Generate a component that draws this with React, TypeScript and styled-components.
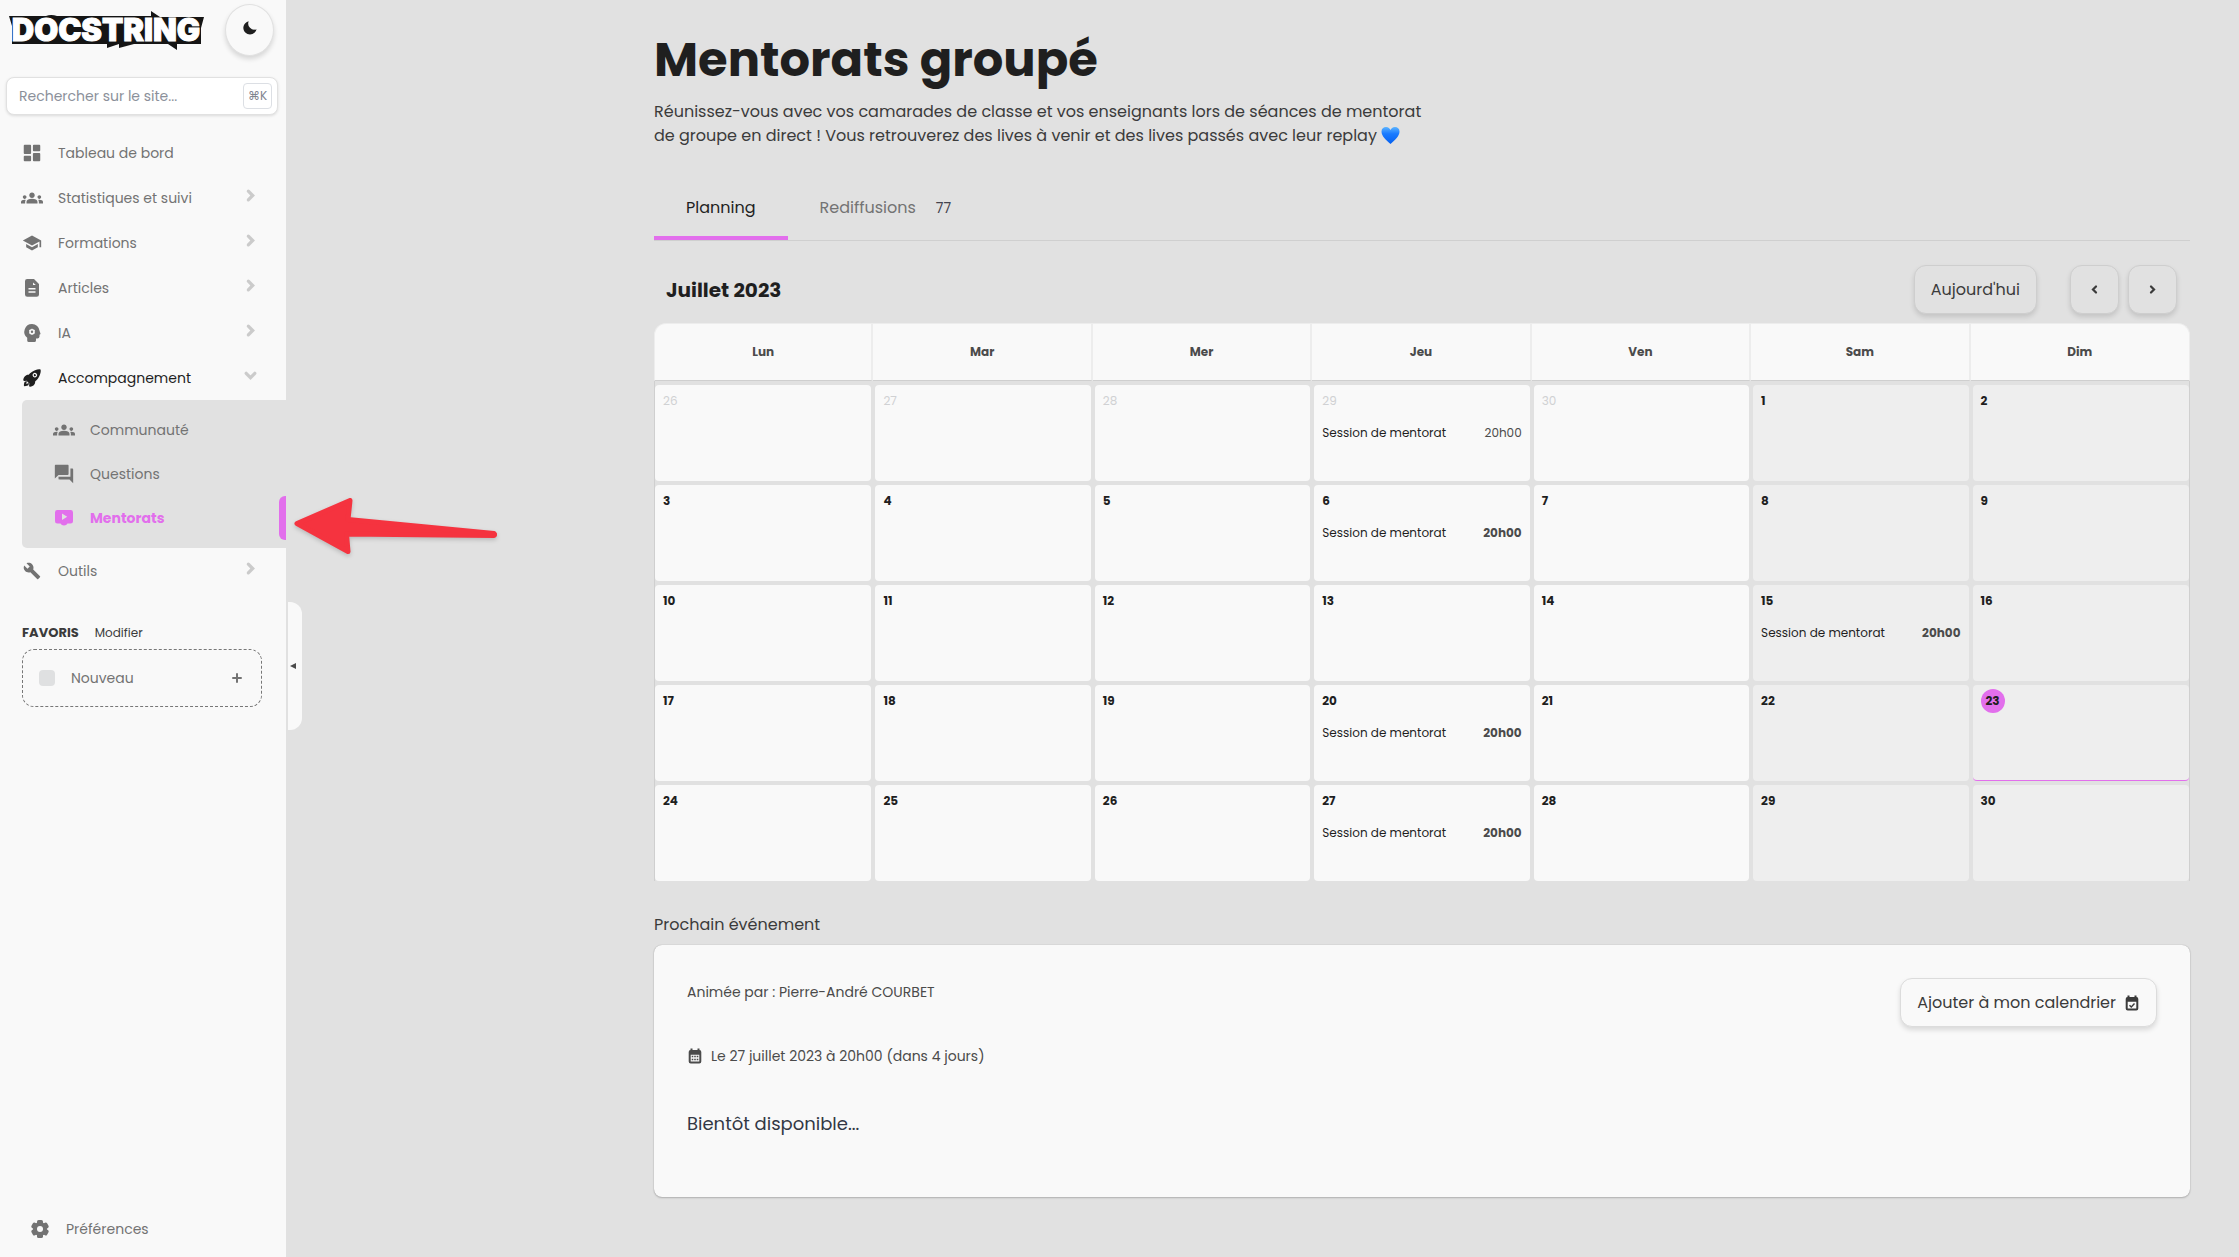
import React from "react";
import styled, { createGlobalStyle, css } from "styled-components";
import { BiSolidDashboard, BiSolidMoon } from "react-icons/bi";
import { MdBuild, MdForum, MdGroups, MdSchool } from "react-icons/md";
import { IoRocket } from "react-icons/io5";

const color = {
  page: "#e1e1e1",
  panel: "#f9f9f9",
  weekend: "#eeeeee",
  ink: "#1f1f1f",
  text: "#3b3b3b",
  soft: "#4b4b4b",
  muted: "#737373",
  faint: "#d0d1d3",
  line: "#cfcfcf",
  accent: "#e26fec",
};

const GlobalStyle = createGlobalStyle`
  *, *::before, *::after { box-sizing: border-box; }
  body {
    margin: 0;
    background: ${color.page};
    color: ${color.text};
    font-family: Poppins, Inter, "Liberation Sans", sans-serif;
    font-size: 16px;
    line-height: 24px;
  }
  button, input { font: inherit; color: inherit; }
  button { cursor: pointer; }
  a { color: inherit; text-decoration: none; }
  h1, h2, p { margin: 0; }
`;

const Layout = styled.div`
  display: flex;
  min-height: 100vh;
`;

/* ---------- Sidebar ---------- */

const Sidebar = styled.aside`
  position: sticky;
  top: 0;
  display: flex;
  flex-direction: column;
  flex: 0 0 286px;
  min-width: 0;
  height: 100vh;
  background: ${color.panel};
  font-size: 14px;
`;

const Brand = styled.div`
  display: flex;
  align-items: center;
  justify-content: space-between;
  padding: 4px 12px 0 8px;
`;

const LogoLink = styled.a`
  display: flex;
  svg { display: block; }
`;

const RoundButton = styled.button`
  display: flex;
  align-items: center;
  justify-content: center;
  width: 49px;
  height: 52px;
  padding: 0 0 4px;
  border: 1px solid ${color.page};
  border-radius: 50%;
  background: ${color.panel};
  color: ${color.ink};
  box-shadow: 0 3px 5px rgba(0, 0, 0, 0.14);
`;

const SearchBox = styled.label`
  display: flex;
  align-items: center;
  height: 38px;
  margin: 21px 8px 0 6px;
  padding: 0 5px 0 12px;
  border: 1px solid ${color.page};
  border-radius: 8px;
  background: #fff;
  box-shadow: 0 1px 3px rgba(0, 0, 0, 0.12);
`;

const SearchInput = styled.input`
  flex: 1;
  width: 100%;
  min-width: 0;
  padding: 0;
  border: 0;
  outline: 0;
  background: none;
  &::placeholder { color: #8b909a; opacity: 1; }
`;

const Shortcut = styled.kbd`
  display: flex;
  align-items: center;
  justify-content: center;
  flex: 0 0 29px;
  height: 26px;
  border: 1px solid #dcdfe4;
  border-radius: 4px;
  color: #80858f;
  font-family: inherit;
  font-size: 12px;
`;

const Nav = styled.nav`
  margin-top: 15px;
`;

const navRow = css`
  display: flex;
  align-items: center;
  gap: 16px;
  width: 100%;
  border: 0;
  background: none;
  text-align: left;
  svg { flex: none; }
`;

const NavLink = styled.a`
  ${navRow}
  height: 45px;
  padding: 0 30px 0 22px;
  color: ${color.muted};
`;

const NavToggle = styled.button<{ $open?: boolean }>`
  ${navRow}
  height: 45px;
  padding: 0 30px 0 22px;
  color: ${(p) => (p.$open ? color.ink : color.muted)};
`;

const NavLabel = styled.span`
  flex: 1;
`;

const IconSlot = styled.span`
  display: flex;
  align-items: center;
  justify-content: center;
  flex: 0 0 20px;
  min-width: 0;
`;

const ChevronSlot = styled.span`
  display: flex;
  justify-content: center;
  width: 12px;
  padding-bottom: 5px;
  color: #cbcbcb;
`;

const SubMenu = styled.div`
  margin-left: 22px;
  padding: 8px 0;
  border-radius: 5px 0 0 5px;
  background: ${color.page};
`;

const SubLink = styled.a<{ $active?: boolean }>`
  ${navRow}
  height: 44px;
  padding-left: 32px;
  color: ${(p) => (p.$active ? color.accent : color.muted)};
  font-weight: ${(p) => (p.$active ? 700 : 400)};
  ${(p) =>
    p.$active &&
    css`
      &::after {
        content: "";
        align-self: stretch;
        width: 7px;
        border-radius: 6px 0 0 6px;
        background: ${color.accent};
      }
    `}
`;

const Favorites = styled.section`
  margin-top: 28px;
  padding: 0 24px 0 22px;
`;

const FavoritesHead = styled.div`
  display: flex;
  align-items: center;
  gap: 16px;
  font-size: 12px;
`;

const FavoritesTitle = styled.h2`
  color: ${color.text};
  font-size: 13px;
  line-height: 24px;
  font-weight: 700;
`;

const TextButton = styled.button`
  padding: 0;
  border: 0;
  background: none;
`;

const NewFavorite = styled.button`
  ${navRow}
  height: 58px;
  margin-top: 4px;
  padding: 0 16px;
  border: 1px dashed #777;
  border-radius: 12px;
  color: ${color.muted};
`;

const Swatch = styled.span`
  width: 16px;
  height: 16px;
  border-radius: 4px;
  background: #dfe0e1;
`;

const SidebarFoot = styled.div`
  margin-top: auto;
  padding: 0 0 6px 8px;
`;

const CollapseHandle = styled.button`
  position: absolute;
  top: 602px;
  left: 288px;
  display: flex;
  align-items: center;
  width: 14px;
  height: 128px;
  padding: 0 0 0 1px;
  border: 0;
  border-radius: 0 12px 12px 0;
  background: ${color.panel};
  color: ${color.soft};
`;

const PointerArrow = styled.svg`
  position: absolute;
  top: 492px;
  left: 290px;
  overflow: visible;
  filter: drop-shadow(0 2px 2px rgba(0, 0, 0, 0.18));
`;

/* ---------- Main ---------- */

const Main = styled.main`
  flex: 1;
  min-width: 0;
  padding: 28px 49px 48px;
`;

const Content = styled.div`
  max-width: 1536px;
  margin-left: auto;
`;

const Title = styled.h1`
  color: ${color.ink};
  font-size: 48px;
  line-height: 64px;
  font-weight: 700;
`;

const Intro = styled.p`
  margin-top: 8px;
  svg { margin-left: 4px; vertical-align: -4px; }
`;

const Tabs = styled.div`
  display: flex;
  margin-top: 30px;
  border-bottom: 1px solid ${color.line};
`;

const Tab = styled.button<{ $active?: boolean }>`
  display: flex;
  gap: 20px;
  padding: 18px 32px 16px;
  border: 0;
  border-bottom: 4px solid ${(p) => (p.$active ? color.accent : "transparent")};
  background: none;
  color: ${(p) => (p.$active ? color.ink : color.muted)};
`;

const Count = styled.span`
  color: #43434d;
  font-size: 14px;
`;

const Toolbar = styled.div`
  display: flex;
  align-items: center;
  gap: 9px;
  padding: 24px 13px 9px 12px;
`;

const Month = styled.h2`
  flex: 1;
  color: ${color.ink};
  font-size: 20px;
  font-weight: 700;
`;

const Button = styled.button<{ $square?: boolean; $raised?: boolean }>`
  display: flex;
  align-items: center;
  justify-content: center;
  gap: 8px;
  height: 49px;
  min-width: 49px;
  padding: ${(p) => (p.$square ? "0" : "0 16px")};
  border: 1px solid ${(p) => (p.$raised ? "#dcdcdc" : "#cecece")};
  border-radius: 12px;
  background: ${(p) => (p.$raised ? color.panel : color.page)};
  box-shadow: 0 3px 5px rgba(0, 0, 0, 0.13);
`;

const Pager = styled.div`
  display: flex;
  gap: 9px;
  margin-left: 24px;
`;

const Calendar = styled.table`
  width: 100%;
  table-layout: fixed;
  border-collapse: separate;
  border-spacing: 0;
  font-size: 12px;
`;

const DayHead = styled.th`
  height: 58px;
  padding: 0;
  border: 0 solid #ededed;
  border-top-width: 1px;
  border-right-width: 2px;
  border-bottom: 1px solid ${color.line};
  background: ${color.panel};
  color: ${color.soft};
  font-size: 12px;
  font-weight: 700;
  &:first-child { border-top-left-radius: 12px; border-left-width: 1px; }
  &:last-child { border-top-right-radius: 12px; border-right-width: 1px; }
`;

const Cell = styled.td`
  padding: 2px;
  &:first-child { padding-left: 0; border-left: 1px solid ${color.line}; }
  &:last-child { padding-right: 0; border-right: 1px solid ${color.line}; }
  tr:first-child > & { padding-top: 4px; }
  tr:last-child > & { padding-bottom: 0; }
`;

const Day = styled.div<{ $weekend: boolean; $today: boolean }>`
  height: 96px;
  padding: 4px 8px;
  border-bottom: ${(p) => (p.$today ? `1px solid ${color.accent}` : "0")};
  border-radius: 4px;
  background: ${(p) => (p.$weekend ? color.weekend : color.panel)};
`;

const DayNumber = styled.time<{ $today: boolean; $outside: boolean }>`
  display: block;
  width: 24px;
  border-radius: 50%;
  color: ${(p) => (p.$outside ? color.faint : color.ink)};
  font-weight: ${(p) => (p.$outside ? 400 : 700)};
  ${(p) =>
    p.$today &&
    css`
      background: ${color.accent};
      text-align: center;
    `}
`;

const Session = styled.a`
  display: flex;
  justify-content: space-between;
  margin-top: 8px;
  color: ${color.ink};
`;

const Hour = styled.span<{ $bold: boolean }>`
  color: ${color.soft};
  font-weight: ${(p) => (p.$bold ? 700 : 400)};
`;

const SectionLabel = styled.h2`
  margin-top: 32px;
  font-size: 16px;
  font-weight: 400;
`;

const EventCard = styled.section`
  display: flex;
  align-items: flex-start;
  justify-content: space-between;
  margin-top: 8px;
  padding: 33px 33px 57px;
  border-radius: 8px;
  background: ${color.panel};
  box-shadow: 0 0 1px rgba(0, 0, 0, 0.3), 0 1px 2px rgba(0, 0, 0, 0.2);
`;

const EventBody = styled.div`
  display: flex;
  flex-direction: column;
  gap: 40px;
  padding-top: 2px;
  color: ${color.soft};
  font-size: 14px;
`;

const EventDate = styled.p`
  display: flex;
  align-items: center;
  gap: 8px;
`;

const EventNote = styled.p`
  padding: 2px 0;
  color: #333845;
  font-size: 18px;
  line-height: 28px;
`;

/* ---------- Drawings ---------- */

const Logo = () => (
  <svg width="198" height="44" viewBox="0 0 198 44" role="img" aria-label="Docstring">
    <path
      d="M1 8H38Q43 6 49 8H143V3L152 9H196L193 20V36H169V42L160 36H126L111 40V36L99 40V36H4V18Z"
      fill="#151515"
    />
    <text
      x="98"
      y="33"
      textAnchor="middle"
      fontFamily="Inter, sans-serif"
      fontSize="31"
      fontWeight="900"
      fill="#fff"
      stroke="#fff"
      strokeWidth="1"
    >
      DOCSTRING
    </text>
  </svg>
);

const Chevron = ({ dir, size = 13, weight = 3 }: { dir: "left" | "right" | "down"; size?: number; weight?: number }) => {
  const d = { left: "M8 2L4 6l4 4", right: "M4 2l4 4-4 4", down: "M2 4l4 4 4-4" }[dir];
  return (
    <svg width={size} height={size} viewBox="0 0 12 12" overflow="visible" fill="none" stroke="currentColor" strokeWidth={weight} strokeLinecap="round">
      <path d={d} />
    </svg>
  );
};

const FileIcon = () => (
  <svg width="20" height="20" viewBox="0 0 20 20" fill="currentColor">
    <path
      fillRule="evenodd"
      d="M5.500 1H12L17 6V16.500A2.300 2.300 0 0 1 14.700 18.800H5.300A2.300 2.300 0 0 1 3 16.500V3.300A2.300 2.300 0 0 1 5.500 1ZM11 4.500V7H13.800ZM6.500 10V11.500H13.500V10ZM6.500 13.300V14.800H13.500V13.300Z"
    />
  </svg>
);

const HeadIcon = () => (
  <svg width="20" height="20" viewBox="0 0 20 20" fill="currentColor">
    <path d="M10 1A7.700 7.700 0 0 1 17.600 8L18.500 10.500Q18.600 11.500 17.500 11.800V13.500Q17.300 15.500 15.500 15.500H14V17.500Q13.800 19 12.500 19H6.800Q5.300 19 5.200 17.500V14.700A7.700 7.700 0 0 1 10 1Z" />
    <circle cx="10" cy="8.700" r="2" fill="none" stroke="#f9f9f9" strokeWidth="1.600" />
    <path d="M10 5.700v1M10 10.700v1M7.400 7.200l.9.500M11.700 9.700l.9.500M12.600 7.200l-.9.500M8.300 9.700l-.9.500" stroke="#f9f9f9" strokeWidth="1.200" />
  </svg>
);

const ScreenPlayIcon = () => (
  <svg width="20" height="20" viewBox="0 0 20 20" fill="currentColor">
    <path
      fillRule="evenodd"
      d="M3.500 2H16.500A2.400 2.400 0 0 1 19 4.400V13.200A2.400 2.400 0 0 1 16.500 15.600H13.500Q12.500 17.500 10 17.500T6.500 15.600H3.500A2.400 2.400 0 0 1 1 13.200V4.400A2.400 2.400 0 0 1 3.500 2ZM8 5.500V12L13.200 8.800Z"
    />
  </svg>
);

const GearIcon = () => (
  <svg width="20" height="20" viewBox="0 0 20 20" fill="currentColor">
    <circle cx="10" cy="10" r="7" />
    {[0, 60, 120].map((angle) => (
      <rect key={angle} x="7" y="1" width="6" height="18" rx="1.600" transform={`rotate(${angle} 10 10)`} />
    ))}
    <circle cx="10" cy="10" r="3" fill="#f9f9f9" />
  </svg>
);

const CalendarIcon = ({ checked }: { checked?: boolean }) => (
  <svg width="16" height="16" viewBox="0 0 16 16" fill="currentColor">
    <path
      fillRule="evenodd"
      d="M3.500 .5H5.500V2H10.500V.5H12.500V2A2 2 0 0 1 14.300 4V13.500A2 2 0 0 1 12.300 15.500H3.700A2 2 0 0 1 1.700 13.500V4A2 2 0 0 1 3.500 2ZM3.700 6.700V13.500H12.300V6.700Z"
    />
    {checked ? (
      <path d="M5.500 10.200l1.800 1.800 3.200-3.400" fill="none" stroke="currentColor" strokeWidth="1.400" />
    ) : (
      <path d="M4.700 8.500h1.600M7.200 8.500h1.600M9.700 8.500h1.600M4.700 11.500h1.600M7.200 11.500h1.600M9.700 11.500h1.600" stroke="currentColor" strokeWidth="1.600" />
    )}
  </svg>
);

const BlueHeart = () => (
  <svg width="19" height="19" viewBox="0 0 19 19" role="img" aria-label="cœur bleu">
    <defs>
      <linearGradient id="heart" x1="0" y1="0" x2="0" y2="1">
        <stop offset="0" stopColor="#5cb4ff" />
        <stop offset="0.400" stopColor="#1a7bff" />
        <stop offset="1" stopColor="#0560f0" />
      </linearGradient>
    </defs>
    <path d="M9.500 18C5 14 .5 10 .5 5.500C.5 2.500 2.500 1 5 1C7.500 1 8.800 2.500 9.500 4C10.200 2.500 11.500 1 14 1C16.500 1 18.500 2.500 18.500 5.500C18.500 10 14 14 9.500 18Z" fill="url(#heart)" />
  </svg>
);

/* ---------- Data ---------- */

const sections = [
  { label: "Statistiques et suivi", icon: <MdGroups size={22} /> },
  { label: "Formations", icon: <MdSchool size={20} /> },
  { label: "Articles", icon: <FileIcon /> },
  { label: "IA", icon: <HeadIcon /> },
];

const dayNames = ["Lun", "Mar", "Mer", "Jeu", "Ven", "Sam", "Dim"];
const TODAY = 27;
const dayNumbers = Array.from({ length: 35 }, (_, i) => (i < 5 ? 26 + i : i - 4));
const sessionSlots = [3, 10, 19, 24, 31];
const weeks = [0, 1, 2, 3, 4].map((w) => dayNames.map((_, d) => w * 7 + d));

const Section = ({ label, icon, open }: { label: string; icon: React.ReactNode; open?: boolean }) => (
  <NavToggle type="button" $open={open} aria-expanded={!!open}>
    <IconSlot>{icon}</IconSlot>
    <NavLabel>{label}</NavLabel>
    <ChevronSlot>
      <Chevron dir={open ? "down" : "right"} />
    </ChevronSlot>
  </NavToggle>
);

const CalendarDay = ({ slot }: { slot: number }) => {
  const today = slot === TODAY;
  const outside = slot < 5;
  return (
    <Cell>
      <Day $weekend={slot % 7 > 4} $today={today}>
        <DayNumber $today={today} $outside={outside}>
          {dayNumbers[slot]}
        </DayNumber>
        {sessionSlots.includes(slot) && (
          <Session href="#session">
            Session de mentorat
            <Hour $bold={!outside}>20h00</Hour>
          </Session>
        )}
      </Day>
    </Cell>
  );
};

export default function App() {
  return (
    <Layout>
      <GlobalStyle />
      <Sidebar>
        <Brand>
          <LogoLink href="#accueil">
            <Logo />
          </LogoLink>
          <RoundButton type="button" aria-label="Mode sombre">
            <BiSolidMoon size={16} />
          </RoundButton>
        </Brand>
        <SearchBox>
          <SearchInput type="search" placeholder="Rechercher sur le site..." aria-label="Rechercher sur le site" />
          <Shortcut>⌘K</Shortcut>
        </SearchBox>
        <Nav>
          <NavLink href="#tableau">
            <IconSlot>
              <BiSolidDashboard size={22} />
            </IconSlot>
            <NavLabel>Tableau de bord</NavLabel>
          </NavLink>
          {sections.map((s) => (
            <Section key={s.label} {...s} />
          ))}
          <Section label="Accompagnement" icon={<IoRocket size={20} />} open />
          <SubMenu>
            <SubLink href="#communaute">
              <IconSlot>
                <MdGroups size={22} />
              </IconSlot>
              <NavLabel>Communauté</NavLabel>
            </SubLink>
            <SubLink href="#questions">
              <IconSlot>
                <MdForum size={22} />
              </IconSlot>
              <NavLabel>Questions</NavLabel>
            </SubLink>
            <SubLink href="#mentorats" $active aria-current="page">
              <IconSlot>
                <ScreenPlayIcon />
              </IconSlot>
              <NavLabel>Mentorats</NavLabel>
            </SubLink>
          </SubMenu>
          <Section label="Outils" icon={<MdBuild size={18} />} />
        </Nav>
        <Favorites>
          <FavoritesHead>
            <FavoritesTitle>FAVORIS</FavoritesTitle>
            <TextButton type="button">Modifier</TextButton>
          </FavoritesHead>
          <NewFavorite type="button">
            <Swatch />
            <NavLabel>Nouveau</NavLabel>
            <svg width="16" height="16" viewBox="0 0 16 16" stroke="currentColor" strokeWidth="2" strokeLinecap="round">
              <path d="M8 4v8M4 8h8" />
            </svg>
          </NewFavorite>
        </Favorites>
        <SidebarFoot>
          <NavLink href="#preferences">
            <IconSlot>
              <GearIcon />
            </IconSlot>
            <NavLabel>Préférences</NavLabel>
          </NavLink>
        </SidebarFoot>
        <CollapseHandle type="button" aria-label="Réduire le menu">
          <svg width="8" height="8" viewBox="0 0 8 8" fill="currentColor">
            <path d="M7 1v6L1 4z" />
          </svg>
        </CollapseHandle>
        <PointerArrow width="210" height="64" viewBox="0 0 210 64" aria-hidden="true">
          <path
            d="M7 31.500L60 8.500L58 27.500L204 41.500Q205 42.500 204 43.500L56.500 42L58 59.500Z"
            fill="#f5333f"
            stroke="#f5333f"
            strokeWidth="5"
            strokeLinejoin="round"
          />
        </PointerArrow>
      </Sidebar>

      <Main>
        <Content>
          <Title>Mentorats groupé</Title>
          <Intro>
            Réunissez-vous avec vos camarades de classe et vos enseignants lors de séances de mentorat
            <br />
            de groupe en direct ! Vous retrouverez des lives à venir et des lives passés avec leur replay
            <BlueHeart />
          </Intro>

          <Tabs role="tablist">
            <Tab type="button" role="tab" aria-selected="true" $active>
              Planning
            </Tab>
            <Tab type="button" role="tab" aria-selected="false">
              Rediffusions <Count>77</Count>
            </Tab>
          </Tabs>

          <Toolbar>
            <Month>Juillet 2023</Month>
            <Button type="button">Aujourd'hui</Button>
            <Pager>
              <Button type="button" $square aria-label="Mois précédent">
                <Chevron dir="left" size={9} />
              </Button>
              <Button type="button" $square aria-label="Mois suivant">
                <Chevron dir="right" size={9} />
              </Button>
            </Pager>
          </Toolbar>

          <Calendar>
            <thead>
              <tr>
                {dayNames.map((name) => (
                  <DayHead key={name} scope="col">
                    {name}
                  </DayHead>
                ))}
              </tr>
            </thead>
            <tbody>
              {weeks.map((week) => (
                <tr key={week[0]}>
                  {week.map((slot) => (
                    <CalendarDay key={slot} slot={slot} />
                  ))}
                </tr>
              ))}
            </tbody>
          </Calendar>

          <SectionLabel>Prochain événement</SectionLabel>
          <EventCard>
            <EventBody>
              <p>Animée par : Pierre-André COURBET</p>
              <EventDate>
                <CalendarIcon />
                Le 27 juillet 2023 à 20h00 (dans 4 jours)
              </EventDate>
              <EventNote>Bientôt disponible...</EventNote>
            </EventBody>
            <Button type="button" $raised>
              Ajouter à mon calendrier
              <CalendarIcon checked />
            </Button>
          </EventCard>
        </Content>
      </Main>
    </Layout>
  );
}
